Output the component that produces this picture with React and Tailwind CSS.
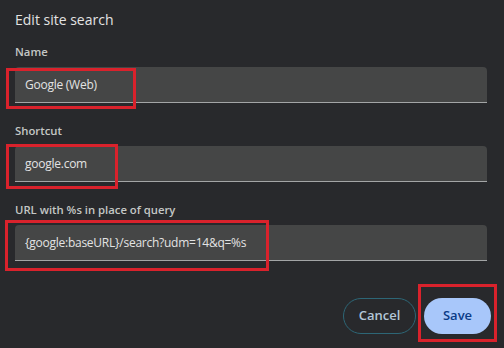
import React from "react";

function Field({ label, value }) {
  return (
    <div className="flex flex-col">
      <div className="h-4 text-[11.3px] leading-4 font-semibold text-[#c4c7c5]">{label}</div>
      <div className="mt-[7px] h-[36px] w-[472px] rounded-t-[4px] bg-[#454646] border-b border-[#a3a5a6] flex items-center pl-[10px] text-[12px] tracking-[-0.25px] text-[#e3e3e3]">
        {value}
      </div>
    </div>
  );
}

function RedBox({ cls }) {
  return <div className={"absolute border-[3px] border-[#d9222c] pointer-events-none " + cls} />;
}

export default function App() {
  return (
    <div
      className="relative w-[504px] h-[348px] overflow-hidden bg-[#28292c] text-[#e3e3e3]"
      style={{ fontFamily: '"Open Sans", "Noto Sans", sans-serif' }}
    >
      <div className="flex flex-col pl-[15px] pt-[10px]">
        <div className="h-5 text-[14px] leading-5 text-[#e3e3e3]">Edit site search</div>
        <div className="mt-[14px]">
          <Field label="Name" value="Google (Web)" />
        </div>
        <div className="mt-[20px]">
          <Field label="Shortcut" value="google.com" />
        </div>
        <div className="mt-[20px]">
          <Field label="URL with %s in place of query" value="{google:baseURL}/search?udm=14&q=%s" />
        </div>
        <div className="mt-[37px] flex justify-end gap-2 pr-[13px]">
          <button className="h-9 w-[73px] rounded-full border border-[#2d6676] text-[13px] font-semibold text-[#b3c6d8]">
            Cancel
          </button>
          <button className="h-9 w-[67px] rounded-full bg-[#a8c7fa] text-[13px] font-semibold text-[#0b3b86]">
            Save
          </button>
        </div>
      </div>
      <RedBox cls="left-[6px] top-[68px] w-[130px] h-[41px]" />
      <RedBox cls="left-[6px] top-[144px] w-[112px] h-[45px]" />
      <RedBox cls="left-[5px] top-[220px] w-[264px] h-[51px]" />
      <RedBox cls="left-[418px] top-[284px] w-[79px] h-[58px]" />
    </div>
  );
}
